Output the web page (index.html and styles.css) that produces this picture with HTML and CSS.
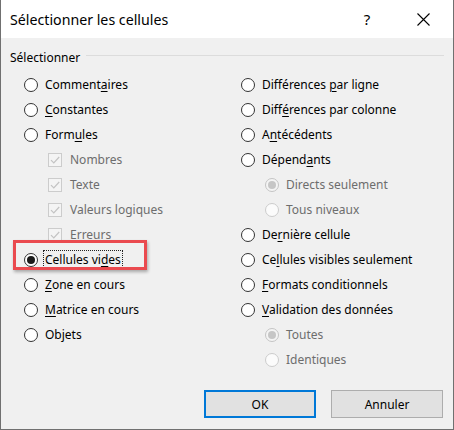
FILE: index.html
```html
<!DOCTYPE html>
<html lang="fr">
<head>
<meta charset="utf-8">
<title>Sélectionner les cellules</title>
<link rel="stylesheet" href="styles.css">
</head>
<body>
<div class="dialog">
  <div class="titlebar">
    <span class="title">Sélectionner les cellules</span>
    <span class="help">?</span>
    <svg class="close" width="13" height="13" viewBox="0 0 13 13"><path d="M0.5 0.5 L12.5 12.5 M12.5 0.5 L0.5 12.5" stroke="#000" stroke-width="1.1" fill="none"/></svg>
  </div>
  <div class="content">
    <div class="group-head"><span>Sélectionner</span><span class="rule"></span></div>
    <div class="cols">
      <div class="col">
        <div class="opt"><span class="radio"></span><span>Comment<u>a</u>ires</span></div>
        <div class="opt"><span class="radio"></span><span><u>C</u>onstantes</span></div>
        <div class="opt"><span class="radio"></span><span>Form<u>u</u>les</span></div>
        <div class="opt sub dis"><span class="check"><svg width="12" height="12" viewBox="0 0 12 12"><path d="M2 6.2 L4.8 9 L10.2 3" stroke="#c3c3c3" stroke-width="1.2" fill="none"/></svg></span><span>Nombres</span></div>
        <div class="opt sub dis"><span class="check"><svg width="12" height="12" viewBox="0 0 12 12"><path d="M2 6.2 L4.8 9 L10.2 3" stroke="#c3c3c3" stroke-width="1.2" fill="none"/></svg></span><span>Texte</span></div>
        <div class="opt sub dis"><span class="check"><svg width="12" height="12" viewBox="0 0 12 12"><path d="M2 6.2 L4.8 9 L10.2 3" stroke="#c3c3c3" stroke-width="1.2" fill="none"/></svg></span><span>Valeurs logiques</span></div>
        <div class="opt sub dis"><span class="check"><svg width="12" height="12" viewBox="0 0 12 12"><path d="M2 6.2 L4.8 9 L10.2 3" stroke="#c3c3c3" stroke-width="1.2" fill="none"/></svg></span><span>Erreurs</span></div>
        <div class="opt focused"><span class="radio on"></span><span class="focus">Cellules vi<u>d</u>es</span><span class="highlight"></span></div>
        <div class="opt"><span class="radio"></span><span><u>Z</u>one en cours</span></div>
        <div class="opt"><span class="radio"></span><span><u>M</u>atrice en cours</span></div>
        <div class="opt"><span class="radio"></span><span>Objets</span></div>
      </div>
      <div class="col">
        <div class="opt"><span class="radio"></span><span>Différences <u>p</u>ar ligne</span></div>
        <div class="opt"><span class="radio"></span><span>Diff<u>é</u>rences par colonne</span></div>
        <div class="opt"><span class="radio"></span><span>A<u>n</u>técédents</span></div>
        <div class="opt"><span class="radio"></span><span>Dépend<u>a</u>nts</span></div>
        <div class="opt sub dis"><span class="radio dis-on"></span><span>Directs seulement</span></div>
        <div class="opt sub dis"><span class="radio dis-off"></span><span>Tous niveaux</span></div>
        <div class="opt"><span class="radio"></span><span>De<u>r</u>nière cellule</span></div>
        <div class="opt"><span class="radio"></span><span>Ce<u>l</u>lules visibles seulement</span></div>
        <div class="opt"><span class="radio"></span><span><u>F</u>ormats conditionnels</span></div>
        <div class="opt"><span class="radio"></span><span><u>V</u>alidation des données</span></div>
        <div class="opt sub dis"><span class="radio dis-on"></span><span>Toutes</span></div>
        <div class="opt sub dis"><span class="radio dis-off"></span><span>Identiques</span></div>
      </div>
    </div>
    <div class="buttons">
      <button class="btn ok">OK</button>
      <button class="btn">Annuler</button>
    </div>
  </div>
</div>
</body>
</html>
```

FILE: styles.css
```css
* { box-sizing: border-box; }
html, body { margin: 0; padding: 0; }
body {
  width: 454px;
  height: 430px;
  overflow: hidden;
  font-family: "Noto Sans", "Open Sans", "DejaVu Sans", sans-serif;
  font-size: 12px;
  color: #000;
  background: #fff;
}
.dialog {
  width: 454px;
  height: 430px;
  border: 1px solid #707070;
  border-top: none;
  background: #f0f0f0;
  display: flex;
  flex-direction: column;
}
.titlebar {
  height: 38px;
  flex: none;
  background: #fff;
  display: flex;
  align-items: center;
  padding-left: 9px;
}
.title { flex: 1; font-size: 14.2px; }
.help { width: 20px; text-align: center; font-size: 15px; margin-right: 40px; }
.close { margin-right: 23px; }
.content {
  flex: 1;
  padding: 9px 9px 0 9px;
  display: flex;
  flex-direction: column;
}
.group-head {
  height: 20px;
  display: flex;
  align-items: center;
}
.rule {
  flex: 1;
  height: 1px;
  background: #dcdcdc;
  margin-left: 6px;
  margin-top: -3px;
}
.cols {
  display: grid;
  grid-template-columns: 217px 1fr;
  padding-left: 14px;
  margin-top: 5px;
}
.opt {
  height: 25px;
  display: flex;
  align-items: center;
  gap: 7px;
  white-space: nowrap;
}
.opt u { text-decoration-thickness: 1px; text-underline-offset: 2px; }
.sub { padding-left: 24px; }
.dis { color: #6d6d6d; }
.radio {
  width: 14px;
  height: 14px;
  flex: none;
  border: 1px solid #333;
  border-radius: 50%;
  background: #fff;
  display: flex;
  align-items: center;
  justify-content: center;
}
.radio.on::after {
  content: "";
  width: 8px;
  height: 8px;
  border-radius: 50%;
  background: #1a1a1a;
}
.radio.dis-off { border-color: #cccccc; background: #fbfbfb; }
.radio.dis-on { border-color: #c4c4c4; background: #f4f4f4; }
.radio.dis-on::after {
  content: "";
  width: 8px;
  height: 8px;
  border-radius: 50%;
  background: #c6c6c6;
}
.check {
  width: 14px;
  height: 14px;
  flex: none;
  border: 1px solid #cccccc;
  background: #f4f4f4;
  display: flex;
  align-items: center;
  justify-content: center;
  margin-right: 1px;
}
.focused { position: relative; }
.focus {
  border: 1px dotted #222;
  padding: 1px 1px;
  line-height: 16px;
  margin-left: -2px;
}
.highlight {
  position: absolute;
  left: -11px;
  top: -7px;
  width: 134px;
  height: 30px;
  border: 3px solid #ea4a4f;
  box-shadow: 1px 2px 3px rgba(0, 0, 0, 0.3);
  pointer-events: none;
}
.buttons {
  display: flex;
  justify-content: flex-end;
  gap: 15px;
  margin-top: 18px;
  margin-right: 1px;
}
.btn {
  width: 112px;
  height: 28px;
  background: #e1e1e1;
  border: 1px solid #adadad;
  font-family: inherit;
  font-size: 12px;
  color: #000;
  padding: 0;
}
.btn.ok { border: 2px solid #0078d7; }
```
